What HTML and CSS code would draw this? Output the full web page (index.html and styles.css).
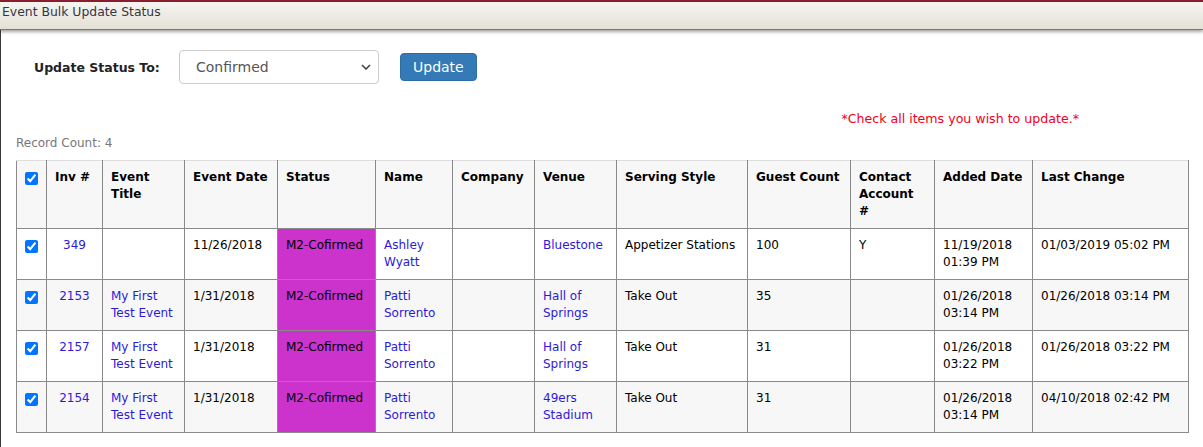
FILE: index.html
```html
<!doctype html>
<html lang="en">
<head>
  <meta charset="utf-8"/>
  <title>Event Bulk Update Status</title>
  <link rel="stylesheet" href="styles.css">
</head>
<body>
  <!-- window title -->
  <div class="titlebar">Event Bulk Update Status</div>

  <div class="pane">
    <form class="status-form">
      <label for="newStatus">Update Status To:</label>
      <select id="newStatus" class="status-select">
        <option>Confirmed</option>
        <option>Tentative</option>
        <option>Cancelled</option>
      </select>
      <button type="button" class="btn-update">Update</button>
    </form>

    <p class="hint">*Check all items you wish to update.*</p>
    <div class="record-count">Record Count: 4</div>

    <table class="events">
      <colgroup>
        <col style="width:30px"><col style="width:56px"><col style="width:82px">
        <col style="width:93px"><col style="width:98px"><col style="width:77px">
        <col style="width:82px"><col style="width:82px"><col style="width:131px">
        <col style="width:103px"><col style="width:84px"><col style="width:98px">
        <col style="width:156px">
      </colgroup>
      <thead>
        <tr>
          <th class="cb"><input type="checkbox" checked></th>
          <th>Inv #</th>
          <th>Event Title</th>
          <th>Event Date</th>
          <th>Status</th>
          <th>Name</th>
          <th>Company</th>
          <th>Venue</th>
          <th>Serving Style</th>
          <th>Guest Count</th>
          <th>Contact Account #</th>
          <th>Added Date</th>
          <th>Last Change</th>
        </tr>
      </thead>
      <tbody>
        <tr>
          <td class="cb"><input type="checkbox" checked></td>
          <td class="inv"><a href="#">349</a></td>
          <td></td>
          <td>11/26/2018</td>
          <td class="status">M2-Cofirmed</td>
          <td><a href="#">Ashley Wyatt</a></td>
          <td></td>
          <td><a href="#">Bluestone</a></td>
          <td>Appetizer Stations</td>
          <td>100</td>
          <td>Y</td>
          <td>11/19/2018 01:39 PM</td>
          <td>01/03/2019 05:02 PM</td>
        </tr>
        <tr>
          <td class="cb"><input type="checkbox" checked></td>
          <td class="inv"><a href="#">2153</a></td>
          <td><a href="#">My First Test Event</a></td>
          <td>1/31/2018</td>
          <td class="status">M2-Cofirmed</td>
          <td><a href="#">Patti Sorrento</a></td>
          <td></td>
          <td><a href="#">Hall of Springs</a></td>
          <td>Take Out</td>
          <td>35</td>
          <td></td>
          <td>01/26/2018 03:14 PM</td>
          <td>01/26/2018 03:14 PM</td>
        </tr>
        <tr>
          <td class="cb"><input type="checkbox" checked></td>
          <td class="inv"><a href="#">2157</a></td>
          <td><a href="#">My First Test Event</a></td>
          <td>1/31/2018</td>
          <td class="status">M2-Cofirmed</td>
          <td><a href="#">Patti Sorrento</a></td>
          <td></td>
          <td><a href="#">Hall of Springs</a></td>
          <td>Take Out</td>
          <td>31</td>
          <td></td>
          <td>01/26/2018 03:22 PM</td>
          <td>01/26/2018 03:22 PM</td>
        </tr>
        <tr>
          <td class="cb"><input type="checkbox" checked></td>
          <td class="inv"><a href="#">2154</a></td>
          <td><a href="#">My First Test Event</a></td>
          <td>1/31/2018</td>
          <td class="status">M2-Cofirmed</td>
          <td><a href="#">Patti Sorrento</a></td>
          <td></td>
          <td><a href="#">49ers Stadium</a></td>
          <td>Take Out</td>
          <td>31</td>
          <td></td>
          <td>01/26/2018 03:14 PM</td>
          <td>04/10/2018 02:42 PM</td>
        </tr>
      </tbody>
    </table>
  </div>
</body>
</html>
```

FILE: styles.css
```css
*{box-sizing:border-box}
html,body{margin:0;height:100%;background:#fff}
body{font-family:"DejaVu Sans",Verdana,sans-serif;font-size:12px;color:#000;overflow:hidden}

/* ---------- title bar ---------- */
.titlebar{
  height:29px;
  padding:2px 0 0 2px;
  border-top:2px solid #8c1d2c;
  background:linear-gradient(#f6f5f1,#e4e0d6);
  color:#353545;
  font-size:12.4px;
  line-height:15px;
  box-shadow:0 1px 0 #777,0 3px 3px rgba(0,0,0,.35);
  position:relative;
  z-index:1;
}

/* ---------- content pane ---------- */
.pane{
  height:calc(100% - 29px);
  border-left:1px solid #3a3a3a;
  padding:21px 0 0 15px;
}

.status-form{display:flex;align-items:center;padding-left:18px}
.status-form label{font-weight:bold;font-size:12.5px;color:#222;width:145px}
.status-select{
  appearance:none;
  -webkit-appearance:none;
  width:200px;
  height:34px;
  padding:0 0 0 16px;
  border:1px solid #ccc;
  border-radius:4px;
  background:#fff url("data:image/svg+xml,%3Csvg xmlns='http://www.w3.org/2000/svg' width='10' height='6'%3E%3Cpath d='M1 1l4 4 4-4' fill='none' stroke='%23444' stroke-width='1.6'/%3E%3C/svg%3E") no-repeat right 7px center;
  color:#555;
  font:14px "DejaVu Sans",Verdana,sans-serif;
}
.btn-update{
  margin-left:21px;
  height:28px;
  padding:0 12px;
  border:1px solid #2e6da4;
  border-radius:4px;
  background:#337ab7;
  color:#fff;
  font:14px "DejaVu Sans",Verdana,sans-serif;
  cursor:pointer;
}

.hint{margin:26px 0 0;padding-right:124px;text-align:right;color:#f0001c;font-size:12.6px;line-height:17px}
.record-count{margin-top:8px;color:#777;line-height:17px}

/* ---------- events table ---------- */
.events{
  margin-top:8px;
  width:1172px;
  table-layout:fixed;
  border-collapse:collapse;
  border:1px solid #8a8a8a;
  border-top-color:#ddd;
}
.events th,.events td{
  border:1px solid #8a8a8a;
  padding:8px 8px;
  vertical-align:top;
  text-align:left;
  line-height:17px;
}
.events thead th{border-top-color:#ddd;background:#f7f7f7;font-weight:bold}
.events tbody tr:nth-child(even){background:#f7f7f7}
.events .cb{padding:8px 0 0 4px}
.events input[type=checkbox]{margin:3px 3px 3px 4px;accent-color:#0075ff}
.events .inv{text-align:center}
.events .status{background:#cc33cc}
.events a{color:#2d1ad8;text-decoration:none}
```
